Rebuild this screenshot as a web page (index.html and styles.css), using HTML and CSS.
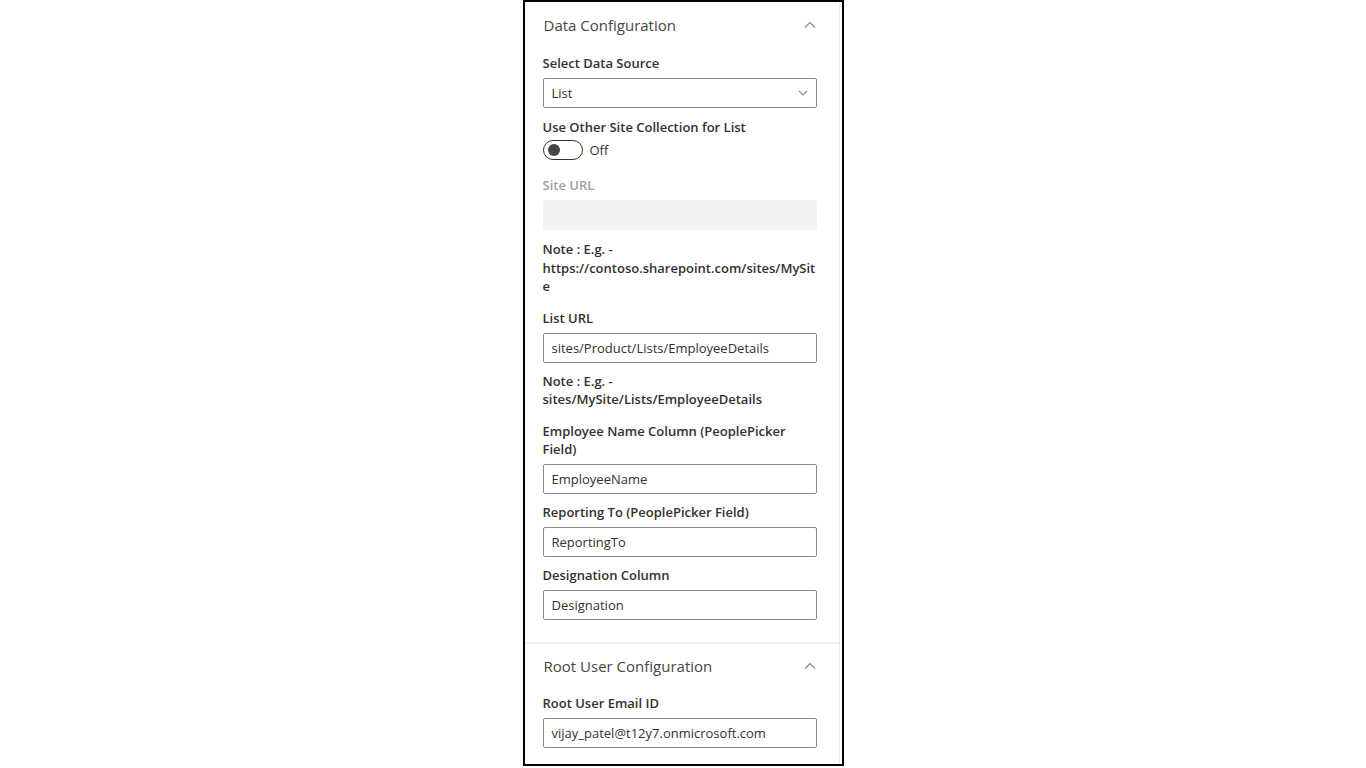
FILE: index.html
```html
<!DOCTYPE html>
<html lang="en">
<head>
<meta charset="utf-8">
<title>Property pane</title>
<link rel="stylesheet" href="styles.css">
</head>
<body>
<div class="pane">
  <div class="pane-inner">
    <section class="group">
      <div class="group-header">
        <span class="group-title">Data Configuration</span>
        <svg class="chev-up" width="12" height="8" viewBox="0 0 12 8"><path d="M1 6.5 L6 1.5 L11 6.5" fill="none" stroke="#8a8886" stroke-width="1.2"/></svg>
      </div>
      <div class="group-body">
        <div class="field field-first">
          <label class="label">Select Data Source</label>
          <div class="dropdown">
            <span class="input-text">List</span>
            <svg class="chev-down" width="10" height="6" viewBox="0 0 10 6"><path d="M1 1 L5 5 L9 1" fill="none" stroke="#8a8886" stroke-width="1.1"/></svg>
          </div>
        </div>
        <div class="field field-toggle">
          <label class="label label-toggle">Use Other Site Collection for List</label>
          <div class="toggle-row">
            <span class="toggle"><span class="knob"></span></span>
            <span class="toggle-text">Off</span>
          </div>
        </div>
        <div class="field">
          <label class="label label-disabled">Site URL</label>
          <div class="input input-disabled"></div>
        </div>
        <p class="note">Note : E.g. -<br>https://contoso.sharepoint.com/sites/MySit<br>e</p>
        <div class="field field-after-note">
          <label class="label">List URL</label>
          <div class="input"><span class="input-text">sites/Product/Lists/EmployeeDetails</span></div>
        </div>
        <p class="note note-2">Note : E.g. -<br>sites/MySite/Lists/EmployeeDetails</p>
        <div class="field field-after-note">
          <label class="label">Employee Name Column (PeoplePicker Field)</label>
          <div class="input"><span class="input-text">EmployeeName</span></div>
        </div>
        <div class="field">
          <label class="label">Reporting To (PeoplePicker Field)</label>
          <div class="input"><span class="input-text">ReportingTo</span></div>
        </div>
        <div class="field">
          <label class="label">Designation Column</label>
          <div class="input"><span class="input-text">Designation</span></div>
        </div>
      </div>
    </section>
    <section class="group group-second">
      <div class="group-header">
        <span class="group-title">Root User Configuration</span>
        <svg class="chev-up" width="12" height="8" viewBox="0 0 12 8"><path d="M1 6.5 L6 1.5 L11 6.5" fill="none" stroke="#8a8886" stroke-width="1.2"/></svg>
      </div>
      <div class="group-body">
        <div class="field">
          <label class="label">Root User Email ID</label>
          <div class="input"><span class="input-text">vijay_patel@t12y7.onmicrosoft.com</span></div>
        </div>
      </div>
    </section>
  </div>
</div>
</body>
</html>
```

FILE: styles.css
```css
* { box-sizing: border-box; }

html, body {
  margin: 0;
  padding: 0;
  background: #ffffff;
}

body {
  font-family: "Open Sans", "Noto Sans", sans-serif;
  color: #323130;
}

.pane {
  width: 321px;
  height: 766px;
  margin: 0 auto;
  border: 2px solid #000000;
  background: #ffffff;
  overflow: hidden;
}

.pane-inner {
  height: 100%;
  width: 315px;
  border-right: 1px solid #ecebea;
}

.group-header {
  height: 46px;
  display: flex;
  align-items: center;
  justify-content: space-between;
  padding: 0 23px 0 19px;
}

.group-title {
  font-size: 15px;
  font-weight: 400;
  color: #484644;
}

.chev-up { display: block; }

.group-body {
  padding: 0 22px 19px 18px;
}

.group-second {
  border-top: 2px solid #f3f2f1;
}

.group-second .group-header {
  height: 44px;
}

.group-second .group-body {
  padding-bottom: 0;
}

.field {
  margin-bottom: 3px;
}

.field-first {
  margin-bottom: 4px;
}

.label {
  display: block;
  font-size: 13px;
  font-weight: 600;
  line-height: 18px;
  padding: 6px 0 6px;
  color: #323130;
}

.label-toggle {
  padding-bottom: 4px;
}

.label-disabled {
  color: #a19f9d;
}

.field-toggle {
  margin-bottom: 10px;
}

.dropdown,
.input {
  height: 30px;
  border: 1px solid #8a8886;
  border-radius: 2px;
  display: flex;
  align-items: center;
  padding: 0 8px;
}

.dropdown {
  justify-content: space-between;
  padding-right: 8px;
}

.input-disabled {
  border-color: #f3f2f1;
  background: #f3f2f1;
}

.input-text {
  font-size: 13px;
  color: #323130;
}

.toggle-row {
  display: flex;
  align-items: center;
  height: 20px;
}

.toggle {
  width: 40px;
  height: 20px;
  border: 1px solid #323130;
  border-radius: 10px;
  display: flex;
  align-items: center;
  padding-left: 4px;
}

.knob {
  width: 12px;
  height: 12px;
  border-radius: 50%;
  background: #484644;
}

.toggle-text {
  font-size: 13px;
  margin-left: 7px;
  color: #323130;
}

.note {
  margin: 10px 0 0;
  font-size: 13px;
  font-weight: 600;
  line-height: 18.5px;
  color: #323130;
}

.note-2 {
  margin-top: 9px;
}

.field-after-note {
  margin-top: 7px;
}
```
